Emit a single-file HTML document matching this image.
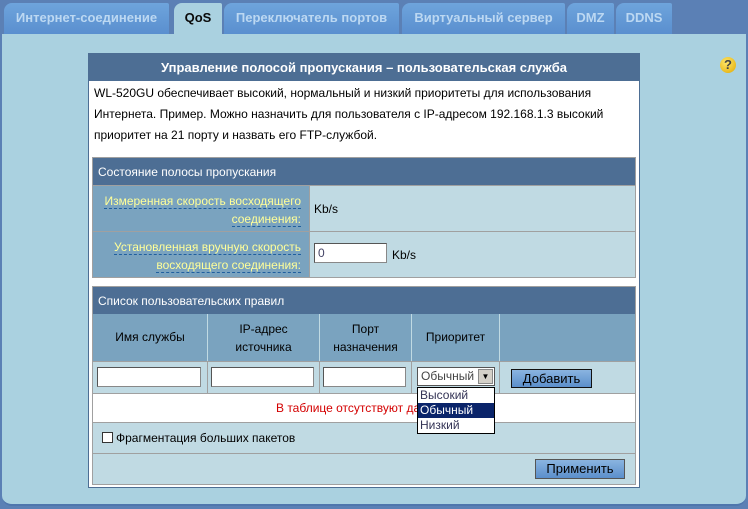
<!DOCTYPE html>
<html><head><meta charset="utf-8"><style>
*{box-sizing:border-box;margin:0;padding:0}
body{width:748px;height:509px;background:#5b80b5;font-family:"Liberation Sans",sans-serif;font-size:12px;position:relative;overflow:hidden}
.tab{position:absolute;top:3px;height:31px;background:linear-gradient(#6ea4dc,#5a8fcf);color:#bcd8f2;font-weight:bold;font-size:13px;line-height:29px;text-align:center;border-radius:8px 2px 0 0}
.tab.act{background:#aad1e0;color:#0a0a0a;height:32px}
.content{position:absolute;left:2px;top:34px;width:744px;height:472px;background:#aad1e0;border-radius:0 0 10px 10px;border-bottom:2px solid #4f76ad}
.panel{position:absolute;left:88px;top:53px;width:552px;height:435px;background:#fff;border:1px solid #4d6e94}
.hd{position:absolute;left:0;top:0;width:550px;height:27px;background:#4d6e94;color:#fff;font-weight:bold;font-size:13px;text-align:center;line-height:28px}
.intro{position:absolute;left:5px;top:29px;width:540px;line-height:21px;color:#000}
.abs{position:absolute}
.sec{background:#4d6e94;color:#fff;line-height:28px;padding-left:5px}
.lab{background:#7aa3bf;color:#ffff99;text-align:right;padding-right:8px}
.lab span{border-bottom:1px dashed #1f5f9f}
.val{background:#c0dae3}
input.t{position:absolute;height:20px;border:1px solid #888;border-top-color:#555;border-left-color:#555;background:#fff}
.ch{background:#7aa3bf;color:#000;text-align:center;line-height:18px;border-right:1px solid #c0dae3}
.btn{position:absolute;border:1px solid #111;background:linear-gradient(#8ab4e0,#5b8fcb);font-size:13px;text-align:center;color:#000}
</style></head><body>
<div class="tab" style="left:4px;width:165px">Интернет-соединение</div>
<div class="tab act" style="left:174px;width:48px">QoS</div>
<div class="tab" style="left:224px;width:175px">Переключатель портов</div>
<div class="tab" style="left:402px;width:163px">Виртуальный сервер</div>
<div class="tab" style="left:567px;width:47px">DMZ</div>
<div class="tab" style="left:616px;width:56px">DDNS</div>
<div class="content"></div>
<div class="abs" style="left:720px;top:57px;width:16px;height:16px;border-radius:50%;background:radial-gradient(circle at 40% 35%,#ffe76a,#e0a800);color:#444;font-weight:bold;font-size:13px;text-align:center;line-height:16px">?</div>
<div class="panel">
<div class="hd">Управление полосой пропускания – пользовательская служба</div>
<div class="intro">WL-520GU обеспечивает высокий, нормальный и низкий приоритеты для использования Интернета. Пример. Можно назначить для пользователя с IP-адресом 192.168.1.3 высокий приоритет на 21 порту и назвать его FTP-службой.</div>
<div class="abs" style="left:3px;top:103px;width:544px;height:121px;background:#a0a0a0"></div>
<div class="abs sec" style="left:4px;top:104px;width:542px;height:27px">Состояние полосы пропускания</div>
<div class="abs lab" style="left:4px;top:132px;width:216px;height:45px;padding-top:6px;line-height:18px"><span>Измеренная скорость восходящего</span><br><span>соединения:</span></div>
<div class="abs val" style="left:221px;top:132px;width:325px;height:45px;padding:15px 4px;line-height:16px">Kb/s</div>
<div class="abs lab" style="left:4px;top:178px;width:216px;height:45px;padding-top:6px;line-height:18px"><span>Установленная вручную скорость</span><br><span>восходящего соединения:</span></div>
<div class="abs val" style="left:221px;top:178px;width:325px;height:45px"></div>
<input class="t" style="left:225px;top:189px;width:73px;color:#446;font-size:12px;padding-left:3px" value="0">
<div class="abs" style="left:303px;top:194px">Kb/s</div>
<div class="abs" style="left:3px;top:232px;width:544px;height:199px;background:#a0a0a0"></div>
<div class="abs sec" style="left:4px;top:233px;width:542px;height:27px">Список пользовательских правил</div>
<div class="abs" style="left:4px;top:260px;width:542px;height:47px;background:#7aa3bf"></div>
<div class="abs ch" style="left:4px;top:260px;width:115px;height:47px;line-height:47px">Имя службы</div>
<div class="abs ch" style="left:119px;top:260px;width:112px;height:47px;padding-top:6px">IP-адрес<br>источника</div>
<div class="abs ch" style="left:231px;top:260px;width:92px;height:47px;padding-top:6px">Порт<br>назначения</div>
<div class="abs ch" style="left:323px;top:260px;width:88px;height:47px;line-height:47px">Приоритет</div>
<div class="abs" style="left:4px;top:308px;width:542px;height:31px;background:#c0dae3"></div>
<div class="abs" style="left:118px;top:308px;width:1px;height:31px;background:#a0a0a0"></div>
<div class="abs" style="left:230px;top:308px;width:1px;height:31px;background:#a0a0a0"></div>
<div class="abs" style="left:322px;top:308px;width:1px;height:31px;background:#a0a0a0"></div>
<div class="abs" style="left:410px;top:308px;width:1px;height:31px;background:#a0a0a0"></div>
<input class="t" style="left:8px;top:313px;width:104px">
<input class="t" style="left:122px;top:313px;width:103px">
<input class="t" style="left:234px;top:313px;width:83px">
<div class="abs" style="left:328px;top:313px;width:78px;height:19px;background:#fff;border:1px solid #555;color:#444;padding-left:3px;line-height:17px">Обычный<div class="abs" style="right:1px;top:1px;width:15px;height:15px;background:#d4d0c8;border:1px solid #888;font-size:8px;text-align:center;line-height:14px;color:#000">▼</div></div>
<div class="btn" style="left:422px;top:315px;width:81px;height:19px;line-height:17px">Добавить</div>
<div class="abs" style="left:4px;top:340px;width:542px;height:28px;background:#fff;color:#d40000;text-align:center;line-height:28px">В таблице отсутствуют данные.</div>
<div class="abs" style="left:4px;top:369px;width:542px;height:30px;background:#c0dae3;line-height:30px;padding-left:9px"><span style="display:inline-block;width:11px;height:11px;background:#fff;border:1px solid #333;vertical-align:-1px;margin-right:3px"></span>Фрагментация больших пакетов</div>
<div class="abs" style="left:4px;top:400px;width:542px;height:30px;background:#c0dae3"></div>
<div class="btn" style="left:446px;top:405px;width:90px;height:20px;line-height:18px;border-color:#555">Применить</div>
<div class="abs" style="left:328px;top:333px;width:78px;height:47px;background:#fff;border:1px solid #000;line-height:15px;color:#335">
<div style="padding-left:2px">Высокий</div>
<div style="padding-left:2px;background:#0a246a;color:#fff">Обычный</div>
<div style="padding-left:2px">Низкий</div></div>
</div>
</body></html>
